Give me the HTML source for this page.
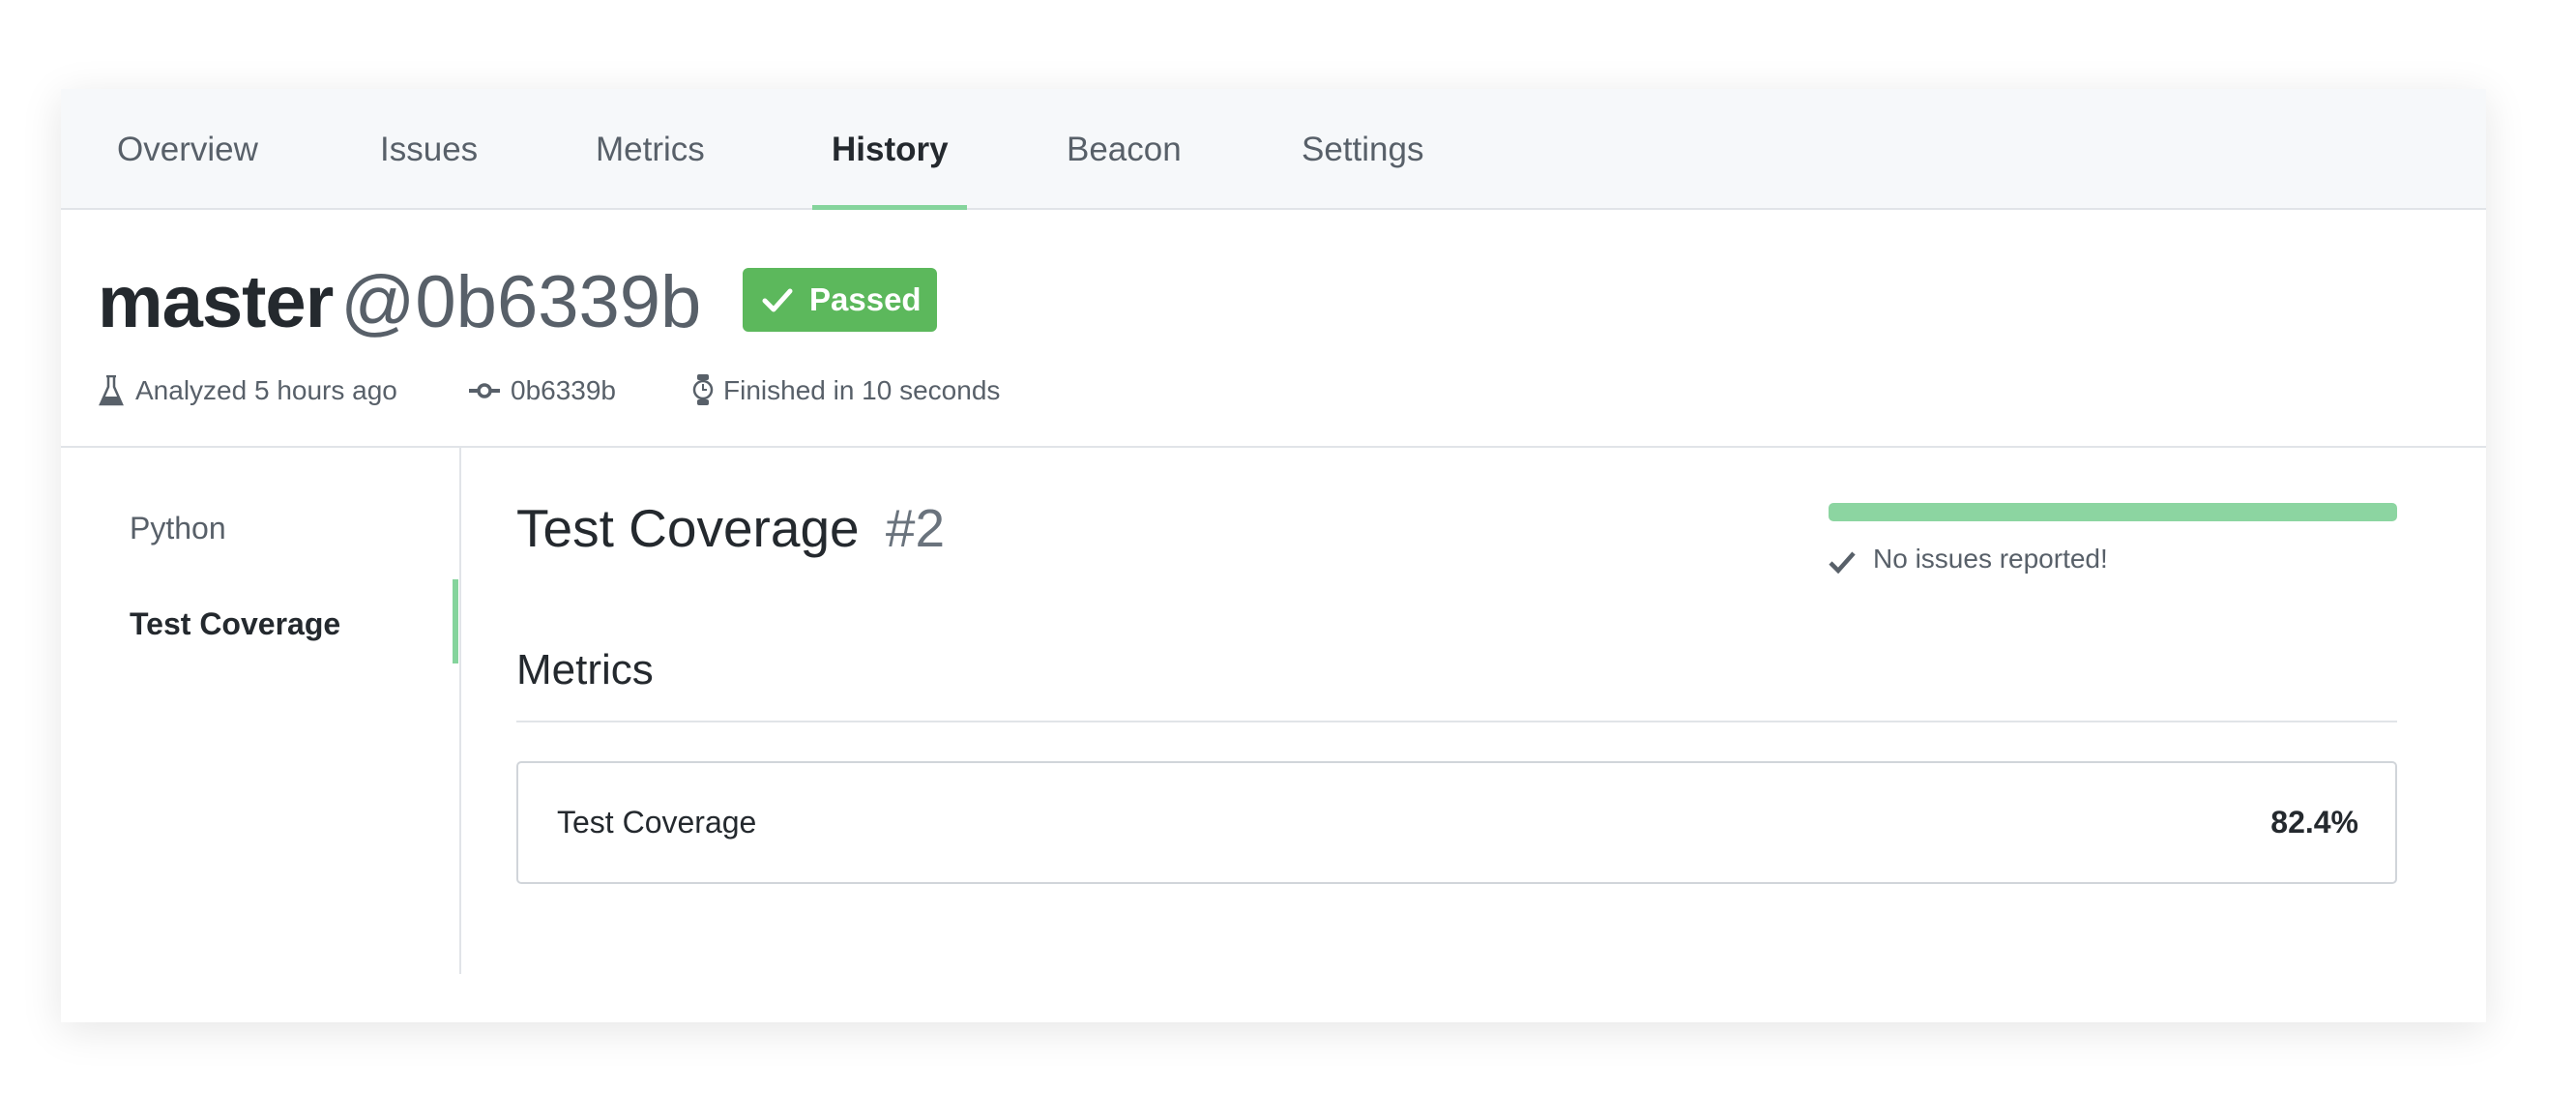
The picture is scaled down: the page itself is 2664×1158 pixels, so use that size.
<!DOCTYPE html>
<html><head><meta charset="utf-8"><style>
*{margin:0;padding:0;box-sizing:border-box}
html,body{width:2664px;height:1158px;background:#fff;overflow:hidden;font-family:"Liberation Sans",sans-serif}
.card{position:absolute;left:63px;top:92px;width:2508px;height:965px;background:#fff;box-shadow:0 8px 40px rgba(0,0,0,0.10)}
.tabs{position:absolute;left:0;top:0;width:100%;height:125px;background:#f6f8fa;border-bottom:2px solid #e1e4e8}
.t{position:absolute;top:43px;font-size:35px;color:#586069;line-height:40px}
.t.a{color:#24292e;font-weight:bold}
.ul{position:absolute;left:777px;top:120px;width:160px;height:5px;background:#85d49c}
.abs{position:absolute}
.meta{position:absolute;top:296px;font-size:28px;color:#586069;line-height:32px}
.hb{position:absolute;left:0;top:369px;width:100%;height:2px;background:#e1e4e8}
</style></head><body>
<div class="card">
 <div class="tabs">
  <div class="t" style="left:58px">Overview</div>
  <div class="t" style="left:330px">Issues</div>
  <div class="t" style="left:553px">Metrics</div>
  <div class="t a" style="left:797px">History</div>
  <div class="t" style="left:1040px">Beacon</div>
  <div class="t" style="left:1283px">Settings</div>
  <div class="ul"></div>
 </div>
 <div class="abs" style="left:38px;top:176px;font-size:76px;line-height:90px;white-space:nowrap"><span style="font-weight:bold;color:#24292e;letter-spacing:-1px">master</span><span style="color:#586069;margin-left:8px">@0b6339b</span></div>
 <div class="abs" style="left:705px;top:185px;width:201px;height:66px;background:#5cb85c;border-radius:6px;color:#fff;font-weight:bold;font-size:33px;line-height:66px">
  <svg class="abs" style="left:20px;top:19px" width="32" height="28" viewBox="0 0 32 28"><path d="M3 15 L12 24 L29 5" fill="none" stroke="#fff" stroke-width="5" stroke-linecap="round" stroke-linejoin="round"/></svg>
  <span class="abs" style="left:69px;top:0">Passed</span>
 </div>
 <svg class="abs" style="left:39px;top:296px" width="26" height="32" viewBox="0 0 26 32"><path d="M8 1h10M10 1v11L2 30h22L16 12V1" fill="none" stroke="#586069" stroke-width="2.5"/><path d="M5 22h16l3 8H2z" fill="#586069"/></svg>
 <div class="meta" style="left:77px">Analyzed 5 hours ago</div>
 <svg class="abs" style="left:422px;top:302px" width="32" height="20" viewBox="0 0 32 20"><circle cx="16" cy="10" r="6" fill="none" stroke="#586069" stroke-width="3.5"/><path d="M0 10h10M22 10h10" stroke="#586069" stroke-width="4"/></svg>
 <div class="meta" style="left:465px">0b6339b</div>
 <svg class="abs" style="left:652px;top:294px" width="24" height="34" viewBox="0 0 24 34"><rect x="6" y="1" width="12" height="6" rx="2" fill="#586069"/><rect x="6" y="27" width="12" height="6" rx="2" fill="#586069"/><circle cx="12" cy="17" r="9" fill="#fff" stroke="#586069" stroke-width="2.5"/><path d="M12 11v6h4" fill="none" stroke="#586069" stroke-width="2"/></svg>
 <div class="meta" style="left:685px">Finished in 10 seconds</div>
 <div class="hb"></div>
 <div class="abs" style="left:412px;top:371px;width:2px;height:544px;background:#e1e4e8"></div>
 <div class="abs" style="left:71px;top:436px;font-size:32px;color:#586069;line-height:36px">Python</div>
 <div class="abs" style="left:71px;top:535px;font-size:32px;color:#24292e;font-weight:bold;line-height:36px">Test Coverage</div>
 <div class="abs" style="left:405px;top:507px;width:6px;height:87px;background:#85d49c"></div>
 <div class="abs" style="left:471px;top:422px;font-size:55px;color:#24292e;line-height:64px;white-space:nowrap">Test Coverage <span style="color:#6a737d;margin-left:12px">#2</span></div>
 <div class="abs" style="left:1828px;top:428px;width:588px;height:19px;background:#8cd5a1;border-radius:5px"></div>
 <svg class="abs" style="left:1828px;top:477px" width="28" height="24" viewBox="0 0 28 24"><path d="M2 13l8 8L26 3" fill="none" stroke="#586069" stroke-width="4.5"/></svg>
 <div class="abs" style="left:1874px;top:470px;font-size:28px;color:#586069;line-height:32px">No issues reported!</div>
 <div class="abs" style="left:471px;top:575px;font-size:44px;color:#24292e;line-height:52px">Metrics</div>
 <div class="abs" style="left:471px;top:653px;width:1945px;height:2px;background:#e1e4e8"></div>
 <div class="abs" style="left:471px;top:695px;width:1945px;height:127px;border:2px solid #d1d5da;border-radius:5px">
  <div class="abs" style="left:40px;top:43px;font-size:32px;color:#24292e;line-height:36px">Test Coverage</div>
  <div class="abs" style="right:38px;top:43px;font-size:32px;color:#24292e;font-weight:bold;line-height:36px">82.4%</div>
 </div>
</div>
</body></html>
